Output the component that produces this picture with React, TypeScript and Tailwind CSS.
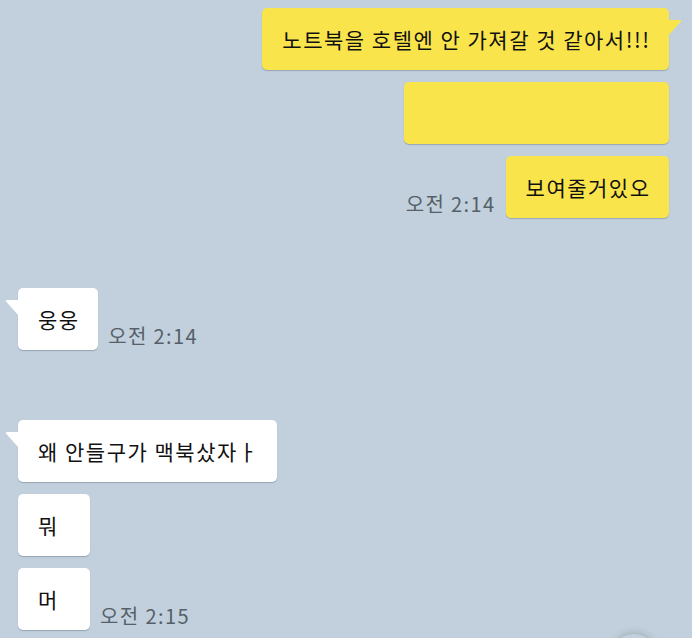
import React from "react";

const font = { fontFamily: '"Noto Sans CJK KR", "Noto Sans", sans-serif' };

function Bubble({ text, mine, tail, w }: { text: string; mine?: boolean; tail?: boolean; w?: string }) {
  return (
    <div
      className={`relative h-[62px] rounded-[5px] px-5 flex items-center text-[21px] tracking-[1.5px] leading-none text-[#111] shadow-[0_1px_1px_rgba(70,90,110,0.35)] ${
        mine ? "bg-[#fae44c]" : "bg-white"
      } ${w ?? ""}`}
    >
      {tail && mine && (
        <svg className="absolute top-[12px] right-[-13px]" width="14" height="16" viewBox="0 0 14 16">
          <path d="M0 0 L12 0 Q14 0 13 1.5 L0 16 Z" fill="#fae44c" />
        </svg>
      )}
      {tail && !mine && (
        <svg className="absolute top-[12px] left-[-13px]" width="14" height="16" viewBox="0 0 14 16">
          <path d="M14 0 L2 0 Q0 0 1 1.5 L14 16 Z" fill="#ffffff" />
        </svg>
      )}
      <span className="whitespace-pre mr-[-1.5px]">{text}</span>
    </div>
  );
}

function Time({ t }: { t: string }) {
  return <span className="text-[20px] tracking-[1.4px] leading-none text-[#566068] pb-[4px]">{t}</span>;
}

export default function App() {
  return (
    <div className="relative w-[692px] h-[638px] overflow-hidden bg-[#c1d0dc]" style={font}>
      <div className="flex flex-col pt-[8px]">
        <div className="flex flex-col items-end gap-3 pr-[23px]">
          <Bubble text="노트북을 호텔엔 안 가져갈 것 같아서!!!" mine tail />
          <Bubble text="" mine w="w-[265px]" />
          <div className="flex items-end gap-[10px]">
            <Time t="오전 2:14" />
            <Bubble text="보여줄거있오" mine />
          </div>
        </div>
        <div className="flex flex-col items-start pl-[18px] mt-[70px]">
          <div className="flex items-end gap-[10px]">
            <Bubble text="웅웅" tail />
            <Time t="오전 2:14" />
          </div>
        </div>
        <div className="flex flex-col items-start gap-3 pl-[18px] mt-[70px]">
          <Bubble text="왜 안들구가 맥북샀자ㅏ" tail />
          <Bubble text="뭐" w="w-[72px]" />
          <div className="flex items-end gap-[10px]">
            <Bubble text="머" w="w-[72px]" />
            <Time t="오전 2:15" />
          </div>
        </div>
      </div>
      <div className="absolute left-[612px] top-[634px] w-[44px] h-[44px] rounded-full bg-[#c1d0dc] shadow-[0_-1px_8px_rgba(0,0,0,0.18)]" />
    </div>
  );
}
